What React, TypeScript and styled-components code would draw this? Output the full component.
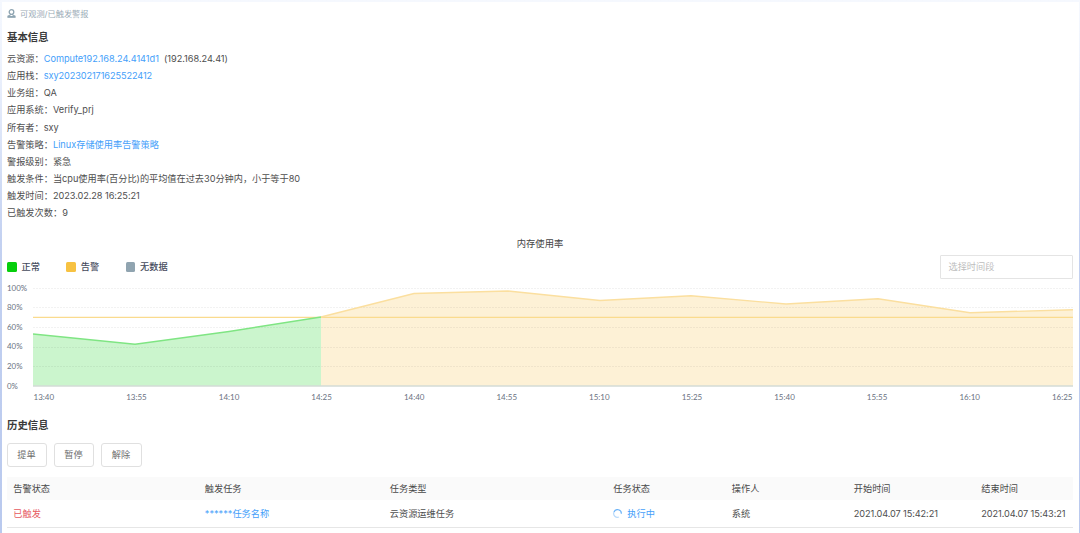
import React from 'react';
import styled, { createGlobalStyle } from 'styled-components';

const GlobalStyle = createGlobalStyle`
  *, *::before, *::after { box-sizing: border-box; }
  body {
    margin: 0;
    background: #fff;
    font-family: Inter, 'Noto Sans CJK SC', sans-serif;
    font-size: 9.2px;
    color: #4e4e4e;
  }
`;

const Frame = styled.div`
  height: 533px;
  overflow: hidden;
  padding: 2px 1.5px 0;
  background: linear-gradient(#f5f8fe 0, #eef3fd 60px, #c3d1f1 240px, #b9c9ee 100%);
`;

const Panel = styled.main`
  height: 531px;
  padding: 0 5.5px;
  background: #fff;
`;

const Breadcrumb = styled.nav`
  display: flex;
  align-items: center;
  gap: 4px;
  height: 22px;
  font-size: 8.2px;
  color: #9aabb6;
`;

const SectionTitle = styled.h2<{ $height: number; $top: number }>`
  margin: 0;
  height: ${(p) => p.$height}px;
  padding-top: ${(p) => p.$top}px;
  line-height: 16px;
  font-size: 10.4px;
  font-weight: 700;
  color: #3a3a3a;
`;

const InfoList = styled.dl`
  margin: 0;
`;

const InfoRow = styled.div`
  display: flex;
  height: 17.17px;
  line-height: 17.17px;
  white-space: pre;
`;

const InfoLabel = styled.dt``;

const InfoValue = styled.dd<{ $spacing?: number }>`
  margin: 0;
  letter-spacing: ${(p) => p.$spacing ?? 0}px;
`;

const Link = styled.a`
  color: #44a0fa;
`;

const ChartTitle = styled.h3`
  margin: 12px 0 0;
  height: 20px;
  line-height: 20px;
  text-align: center;
  font-size: 9.3px;
  font-weight: 400;
  color: #444;
`;

const ChartToolbar = styled.div`
  display: flex;
  align-items: center;
  justify-content: space-between;
  height: 24px;
  margin-top: 1px;
`;

const Legend = styled.div`
  display: flex;
  gap: 26.4px;
`;

const LegendItem = styled.span<{ $color: string }>`
  display: flex;
  align-items: center;
  gap: 5px;
  color: #454b5c;
  font-weight: 500;
  line-height: 14px;
  &::before {
    content: '';
    width: 9.5px;
    height: 10px;
    border-radius: 1.5px;
    background: ${(p) => p.$color};
  }
`;

const RangeInput = styled.div`
  width: 133px;
  height: 24px;
  padding: 0 7.5px;
  border: 1px solid #e4e4e4;
  border-radius: 1px;
  line-height: 22px;
  color: #bdbdbd;
`;

const Chart = styled.div`
  display: grid;
  grid-template-columns: 26px 1040px;
  margin-top: 4px;
  font-family: Lato, sans-serif;
  color: #6a7282;
`;

const YAxis = styled.div`
  display: flex;
  flex-direction: column;
  justify-content: space-between;
  height: 108px;
  font-size: 7.9px;
  line-height: 10px;
`;

const Plot = styled.svg`
  display: block;
  width: 1040px;
  height: 108px;
`;

const XAxis = styled.div`
  grid-column: 2;
  display: flex;
  justify-content: space-between;
  padding: 0 0.4px 0 0.6px;
  height: 12px;
  line-height: 12px;
  font-size: 8px;
`;

const Actions = styled.div`
  display: flex;
  gap: 7px;
`;

const ActionButton = styled.button<{ $width: number }>`
  width: ${(p) => p.$width}px;
  height: 24px;
  padding: 0 1px 1px 0;
  border: 1px solid #e0e0e0;
  border-radius: 3px;
  background: #fff;
  font: inherit;
  color: #6c6c6c;
`;

const Table = styled.div`
  margin-top: 10px;
  width: 1066px;
`;

const TableRow = styled.div<{ $head?: boolean }>`
  display: grid;
  grid-template-columns: 191.5px 185px 223.5px 118.5px 122px 127.5px 1fr;
  align-items: center;
  height: ${(p) => (p.$head ? 23 : 28)}px;
  padding-left: 6.3px;
  background: ${(p) => (p.$head ? '#fafafa' : '#fff')};
  border-bottom: ${(p) => (p.$head ? 'none' : '1px solid #e6e6e6')};
  white-space: nowrap;
`;

const Cell = styled.span<{ $tone?: string; $spacing?: number }>`
  display: flex;
  align-items: center;
  gap: 5px;
  color: ${(p) => p.$tone ?? '#4e4e4e'};
  letter-spacing: ${(p) => p.$spacing ?? 0}px;
`;

const blue = '#44a0fa';

const info: { label: string; value: React.ReactNode; spacing?: number }[] = [
  {
    label: '云资源：',
    value: (
      <>
        <Link>Compute192.168.24.4141d1</Link>
        {'  (192.168.24.41)'}
      </>
    ),
    spacing: -0.03,
  },
  { label: '应用栈：', value: <Link>sxy202302171625522412</Link>, spacing: -0.1 },
  { label: '业务组：', value: 'QA' },
  { label: '应用系统：', value: 'Verify_prj' },
  { label: '所有者：', value: 'sxy' },
  { label: '告警策略：', value: <Link>Linux存储使用率告警策略</Link> },
  { label: '警报级别：', value: '紧急' },
  { label: '触发条件：', value: '当cpu使用率(百分比)的平均值在过去30分钟内，小于等于80', spacing: -0.03 },
  { label: '触发时间：', value: '2023.02.28 16:25:21', spacing: -0.07 },
  { label: '已触发次数：', value: '9' },
];

const times = ['13:40', '13:55', '14:10', '14:25', '14:40', '14:55', '15:10', '15:25', '15:40', '15:55', '16:10', '16:25'];
const normal = '0,51 102,61.2 196,48.5 288,34';
const alarm = '288,34 381,10.5 475,8 567,17.5 658,12.7 753,21 845,15.7 937,29.7 1040,26.7';

const UserIcon = () => (
  <svg width="9" height="9" viewBox="0 0 9 9" fill="none" stroke="#8fa5b2">
    <circle cx="4.5" cy="3" r="2.3" strokeWidth="1.3" />
    <path d="M3.4 5v1L1 7v.5h7V7L5.6 6V5" strokeWidth="1.1" />
    <path d="M.4 8.3h8.2" strokeWidth="1.1" />
  </svg>
);

const Spinner = () => (
  <svg width="9" height="9" viewBox="0 0 9 9" fill="none" strokeWidth="1.2">
    <path d="M6 8A3.8 3.8 0 0 1 1 3" stroke="#b9dafb" />
    <path d="M1 3A3.8 3.8 0 0 1 8.3 4.8" stroke="#6bb3f8" />
  </svg>
);

export default function App() {
  return (
    <Frame>
      <GlobalStyle />
      <Panel>
        <Breadcrumb>
          <UserIcon />
          可观测/已触发警报
        </Breadcrumb>
        <SectionTitle $height={26} $top={5.5}>基本信息</SectionTitle>
        <InfoList>
          {info.map((row) => (
            <InfoRow key={row.label}>
              <InfoLabel>{row.label}</InfoLabel>
              <InfoValue $spacing={row.spacing}>{row.value}</InfoValue>
            </InfoRow>
          ))}
        </InfoList>

        <ChartTitle>内存使用率</ChartTitle>
        <ChartToolbar>
          <Legend>
            <LegendItem $color="#06ce0c">正常</LegendItem>
            <LegendItem $color="#f7c242">告警</LegendItem>
            <LegendItem $color="#90a4b0">无数据</LegendItem>
          </Legend>
          <RangeInput>选择时间段</RangeInput>
        </ChartToolbar>
        <Chart>
          <YAxis>
            {['100%', '80%', '60%', '40%', '20%', '0%'].map((v) => (
              <span key={v}>{v}</span>
            ))}
          </YAxis>
          <Plot viewBox="0 0 1040 108" fill="none">
            <polygon points={`${normal} 288,103 0,103`} fill="#cbf5cd" />
            <polygon points={`${alarm} 1040,103 288,103`} fill="#fdf1d6" />
            {[5.5, 24.5, 44.5, 64.5, 83.5].map((y) => (
              <path key={y} d={`M0 ${y}H1040`} stroke="#000" strokeOpacity=".05" strokeDasharray="2 1" />
            ))}
            <path d="M0 34.3H1040" stroke="#fadb8e" strokeWidth="1.3" />
            <polyline points={alarm} stroke="#fbdf9f" strokeWidth="1.4" />
            <polyline points={normal} stroke="#7fe583" strokeWidth="1.4" />
            <path d="M0 103H1040" stroke="#d3dbd6" strokeWidth="1.3" />
          </Plot>
          <XAxis>
            {times.map((t) => (
              <span key={t}>{t}</span>
            ))}
          </XAxis>
        </Chart>

        <SectionTitle $height={40} $top={15}>历史信息</SectionTitle>
        <Actions>
          <ActionButton $width={40}>提单</ActionButton>
          <ActionButton $width={40}>暂停</ActionButton>
          <ActionButton $width={41}>解除</ActionButton>
        </Actions>
        <Table>
          <TableRow $head>
            {['告警状态', '触发任务', '任务类型', '任务状态', '操作人', '开始时间', '结束时间'].map((h) => (
              <Cell key={h} $tone="#484848">{h}</Cell>
            ))}
          </TableRow>
          <TableRow>
            <Cell $tone="#e65a5f">已触发</Cell>
            <Cell $tone={blue}>******任务名称</Cell>
            <Cell>云资源运维任务</Cell>
            <Cell $tone={blue}>
              <Spinner />
              执行中
            </Cell>
            <Cell>系统</Cell>
            <Cell $spacing={-0.1}>2021.04.07 15:42:21</Cell>
            <Cell $spacing={-0.1}>2021.04.07 15:43:21</Cell>
          </TableRow>
        </Table>
      </Panel>
    </Frame>
  );
}
